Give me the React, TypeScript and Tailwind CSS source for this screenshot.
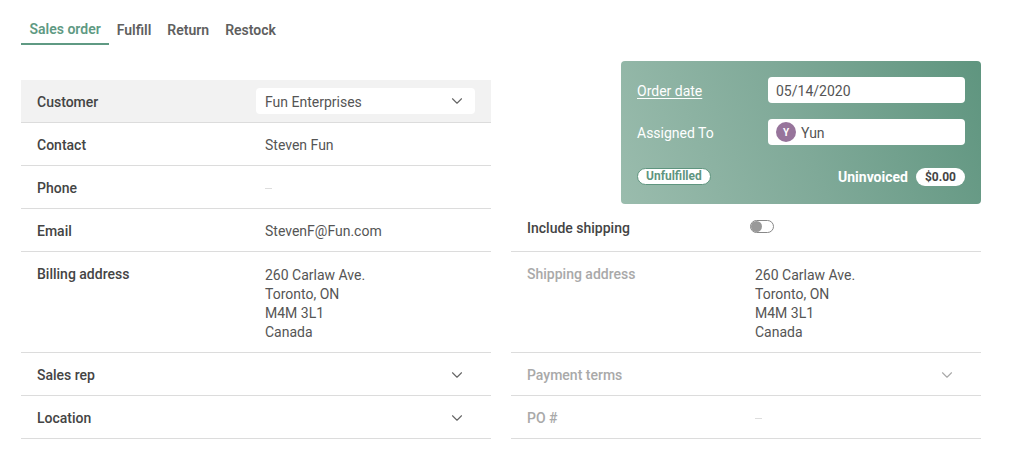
import React from "react";
import { ChevronDown } from "lucide-react";

function Row({ label, muted, children, chevron, highlight }: { label: string; muted?: boolean; children?: React.ReactNode; chevron?: boolean; highlight?: boolean }) {
  return (
    <div className={`flex items-center h-[43px] border-b border-[#dcdcdc] pl-4 pt-[2px] ${highlight ? "bg-[#f2f2f2]" : ""}`}>
      <div className={`w-[228px] text-[14px] font-medium ${muted ? "text-[#a9a9a9]" : "text-[#444444]"}`}>{label}</div>
      <div className="flex-1 text-[14px] text-[#555555]">{children}</div>
      {chevron && <ChevronDown size={18} strokeWidth={1.5} className={`mr-[25px] ${muted ? "text-[#a9a9a9]" : "text-[#666666]"}`} />}
    </div>
  );
}

function Address({ label, muted }: { label: string; muted?: boolean }) {
  return (
    <div className="flex h-[101px] border-b border-[#dcdcdc] pl-4 pt-[12px]">
      <div className={`w-[228px] text-[14px] leading-[20px] font-medium ${muted ? "text-[#a9a9a9]" : "text-[#444444]"}`}>{label}</div>
      <div className="text-[14px] leading-[19px] text-[#555555] pt-[2px]">
        <div>260 Carlaw Ave.</div>
        <div>Toronto, ON</div>
        <div>M4M 3L1</div>
        <div>Canada</div>
      </div>
    </div>
  );
}

const Dash = () => <span className="block w-[7px] h-px bg-[#dddddd]" />;

export default function App() {
  return (
    <div className="w-[1011px] h-[451px] bg-white overflow-hidden pl-[21px] pt-[16px] font-['Roboto',sans-serif]">
      {/* Tabs */}
      <div className="flex items-center text-[14px] font-semibold text-[#5f5f5f]">
        <div className="h-[29px] px-[8.5px] flex items-center border-b-2 border-[#5f9a83] text-[#5f9a83]">Sales order</div>
        <div className="h-[29px] pl-[7.5px] pr-[8px] flex items-center">Fulfill</div>
        <div className="h-[29px] px-2 flex items-center">Return</div>
        <div className="h-[29px] px-2 flex items-center">Restock</div>
      </div>

      <div className="flex gap-5 items-start">
        {/* Left column */}
        <div className="w-[470px] mt-[35px]">
          <Row label="Customer" highlight>
            <div className="w-[219px] h-[26px] -mt-[2px] bg-white rounded-[4px] flex items-center justify-between pl-[9px] pr-[9px] -ml-[9px]">
              <span className="pt-[2px]">Fun Enterprises</span>
              <ChevronDown size={18} strokeWidth={1.5} className="text-[#666666]" />
            </div>
          </Row>
          <Row label="Contact">Steven Fun</Row>
          <Row label="Phone"><Dash /></Row>
          <Row label="Email">StevenF@Fun.com</Row>
          <Address label="Billing address" />
          <Row label="Sales rep" chevron />
          <Row label="Location" chevron />
        </div>

        {/* Right column */}
        <div className="w-[470px] mt-4">
          <div className="ml-[110px] h-[143px] rounded-[4px] bg-[linear-gradient(68deg,#9abcad_0%,#7fa998_50%,#5f957f_100%)] p-4 flex flex-col">
            <div className="flex items-center h-[26px]">
              <span className="w-[131px] pt-[2px] text-[14px] text-white underline underline-offset-2">Order date</span>
              <div className="flex-1 h-[26px] pt-[2px] bg-white rounded-[4px] flex items-center px-2 text-[14px] text-[#555555]">05/14/2020</div>
            </div>
            <div className="flex items-center h-[26px] mt-4">
              <span className="w-[131px] pt-[2px] text-[14px] text-white">Assigned To</span>
              <div className="flex-1 h-[26px] bg-white rounded-[4px] flex items-center px-2 gap-[5px] text-[14px] text-[#555555]">
                <span className="w-5 h-5 rounded-full bg-[#97749b] text-white text-[10px] font-bold flex items-center justify-center">Y</span>
                <span className="pt-[2px]">Yun</span>
              </div>
            </div>
            <div className="flex items-center justify-between mt-[20px]">
              <span className="h-[17px] px-2 -mt-[1px] rounded-full bg-white border border-[#5f957f] text-[#5f957f] text-[12px] font-bold flex items-center">Unfulfilled</span>
              <div className="flex items-center gap-2">
                <span className="pt-[2px] text-[14px] font-bold text-white">Uninvoiced</span>
                <span className="h-[18px] px-[9px] rounded-full bg-white text-[#444444] text-[12px] font-bold flex items-center">$0.00</span>
              </div>
            </div>
          </div>

          <div className="flex items-center h-[47px] border-b border-[#dcdcdc] pl-4 mt-px">
            <div className="w-[223px] text-[14px] font-medium text-[#444444]">Include shipping</div>
            <div className="w-[24px] h-[13px] rounded-full border border-[#888888] flex items-center -mt-[4px]">
              <span className="w-[11px] h-[11px] rounded-full bg-[#999999]" />
            </div>
          </div>
          <Address label="Shipping address" muted />
          <Row label="Payment terms" muted chevron />
          <Row label="PO #" muted><Dash /></Row>
        </div>
      </div>
    </div>
  );
}
